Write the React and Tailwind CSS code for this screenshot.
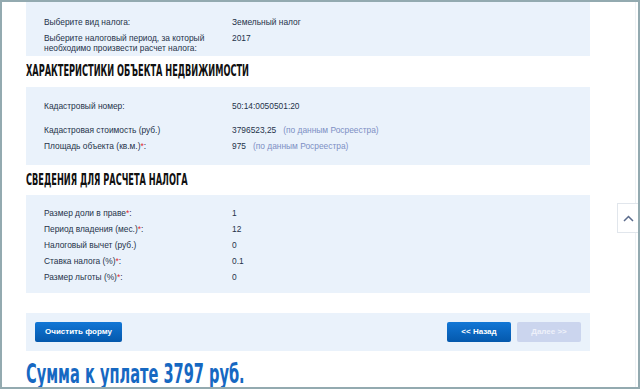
import React from "react";

const label = "font-['Liberation_Sans',Arial,sans-serif] text-[8.4px] leading-[10px] text-[#25324a]";
const heading =
  "font-['DejaVu_Sans_Condensed','Liberation_Sans_Narrow',sans-serif] font-bold text-[15px] leading-none text-[#111] uppercase origin-left scale-x-[0.61] whitespace-nowrap";

function Req() {
  return <span className="text-[#e0262b]">*</span>;
}

function Row({ name, value, className = "" }) {
  return (
    <div className={`grid grid-cols-[188px_1fr] py-[3px] ${label} ${className}`}>
      <div>{name}</div>
      <div>{value}</div>
    </div>
  );
}

function Source() {
  return <span className="ml-[7px] text-[#7d8fc4]">(по данным Росреестра)</span>;
}

export default function App() {
  return (
    <div className="relative w-[640px] h-[389px] overflow-hidden bg-white border-2 border-[#93aab0]">
      <div className="absolute right-[2px] top-0 bottom-0 w-px bg-[#eef2f5]" />
      <button className="absolute right-0 top-[201px] w-[21px] h-[30px] bg-white border border-r-0 border-[#e1e6ec] flex items-center justify-center">
        <svg width="11" height="7" viewBox="0 0 11 7" fill="none">
          <path d="M1 6 L5.5 1.5 L10 6" stroke="#5b6b8c" strokeWidth="1.5" />
        </svg>
      </button>

      <div className="ml-6 w-[564px]">
        <div className="bg-[#eaf2fb] pt-3 pl-[18px]">
          <Row name="Выберите вид налога:" value="Земельный налог" />
          <Row
            name={
              <>
                Выберите налоговый период, за который
                <br />
                необходимо произвести расчет налога:
              </>
            }
            value="2017"
          />
        </div>

        <div className="h-[31px] flex items-center">
          <h2 className={heading}>Характеристики объекта недвижимости</h2>
        </div>

        <div className="bg-[#eaf2fb] pt-[11px] pb-[11px] pl-[18px]">
          <Row name="Кадастровый номер:" value="50:14:0050501:20" />
          <Row
            className="mt-2"
            name="Кадастровая стоимость (руб.)"
            value={
              <>
                3796523,25
                <Source />
              </>
            }
          />
          <Row
            name={
              <>
                Площадь объекта (кв.м.)<Req />:
              </>
            }
            value={
              <>
                975
                <Source />
              </>
            }
          />
        </div>

        <div className="h-[30px] flex items-center">
          <h2 className={heading}>Сведения для расчета налога</h2>
        </div>

        <div className="bg-[#eaf2fb] pt-[10px] pb-2 pl-[18px]">
          <Row name={<>Размер доли в праве<Req />:</>} value="1" />
          <Row name={<>Период владения (мес.)<Req />:</>} value="12" />
          <Row name="Налоговый вычет (руб.)" value="0" />
          <Row name={<>Ставка налога (%)<Req />:</>} value="0.1" />
          <Row name={<>Размер льготы (%)<Req />:</>} value="0" />
        </div>

        <div className="mt-5 bg-[#eaf2fb] py-[9px] px-[9px] flex items-center font-['Liberation_Sans',Arial,sans-serif] text-[8px] font-bold">
          <button className="h-5 w-[87px] rounded-[2px] bg-gradient-to-b from-[#1277d6] to-[#0558ac] text-white">
            Очистить форму
          </button>
          <div className="ml-auto flex gap-[6px]">
            <button className="h-5 w-16 rounded-[2px] bg-gradient-to-b from-[#1277d6] to-[#0558ac] text-white">
              &lt;&lt; Назад
            </button>
            <button className="h-5 w-16 rounded-[2px] bg-[#cbd5ee] text-[#eef1fa]">
              Далее &gt;&gt;
            </button>
          </div>
        </div>

        <div className="mt-[9px] font-['DejaVu_Sans_Condensed','Liberation_Sans_Narrow',sans-serif] font-bold text-[27px] leading-none text-[#1668c2] origin-left scale-x-[0.6] whitespace-nowrap">
          Сумма к уплате 3797 руб.
        </div>
      </div>
    </div>
  );
}
